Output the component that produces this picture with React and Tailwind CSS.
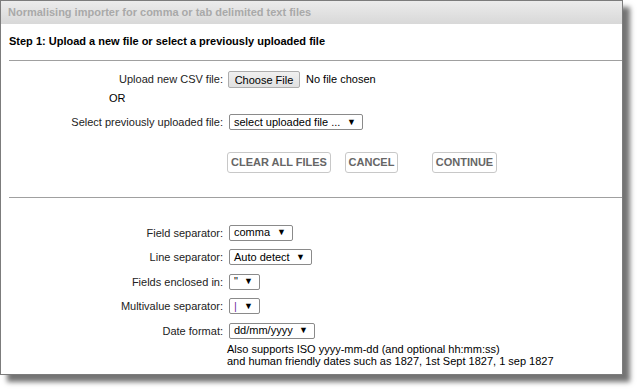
import React from "react";

const font = { fontFamily: '"Liberation Sans", Arial, sans-serif' };

const FakeSelect = ({ value, width }) => (
  <div
    className={`flex h-[16px] items-center justify-between rounded-[2px] border border-[#8a8a8a] bg-white pl-[4px] pr-[6px] text-[11px] leading-none text-black ${width}`}
  >
    <span>{value}</span>
    <span className="text-[9px]">▼</span>
  </div>
);

const Row = ({ label, children, className = "" }) => (
  <div className={`flex items-center ${className}`}>
    <div className="w-[222px] text-right text-[11px] text-[#222]">{label}</div>
    <div className="ml-[6px] flex items-center">{children}</div>
  </div>
);

const ActionButton = ({ children, className = "" }) => (
  <button
    className={`h-[21px] whitespace-nowrap rounded-[3px] border border-[#c8c8c8] bg-white px-[2px] text-[11px] font-bold text-[#666] ${className}`}
  >
    {children}
  </button>
);

export default function App() {
  return (
    <div className="h-[389px] w-[638px] bg-white" style={font}>
      <div className="flex h-[375px] w-[623px] flex-col border border-[#7c7c7c] bg-white shadow-[7px_7px_5px_rgba(0,0,0,0.55)]">
        {/* title bar */}
        <div className="flex h-[23px] items-center bg-gradient-to-b from-[#ececec] to-[#d8d8d8] pl-[7px] text-[11px] font-bold text-[#a9a9a9]">
          Normalising importer for comma or tab delimited text files
        </div>

        <div className="pt-[10px] pl-[8px] text-[11px] font-bold text-black leading-[14px]">
          Step 1: Upload a new file or select a previously uploaded file
        </div>
        <div className="ml-[8px] mt-[12px] border-t border-[#a0a0a0]" />

        {/* upload section */}
        <Row label="Upload new CSV file:" className="mt-[10px]">
          <button className="-ml-[1px] h-[17px] w-[72px] rounded-[2px] border border-[#adadad] bg-gradient-to-b from-[#f0f0f0] to-[#e1e1e1] text-[11px] text-black">
            Choose File
          </button>
          <span className="ml-[6px] text-[11px] text-black">No file chosen</span>
        </Row>
        <div className="ml-[108px] mt-[3px] text-[11px] leading-[14px] text-black">OR</div>
        <Row label="Select previously uploaded file:" className="mt-[9px]">
          <FakeSelect value="select uploaded file ..." width="w-[134px]" />
        </Row>

        <div className="mt-[21px] flex pl-[226px]">
          <ActionButton className="w-[104px]">CLEAR ALL FILES</ActionButton>
          <ActionButton className="ml-[14px] w-[53px]">CANCEL</ActionButton>
          <ActionButton className="ml-[34px] w-[65px]">CONTINUE</ActionButton>
        </div>

        <div className="ml-[8px] mt-[24px] border-t border-[#a0a0a0]" />

        {/* options */}
        <div className="mt-[27px] flex flex-col gap-[8px]">
          <Row label="Field separator:">
            <FakeSelect value="comma" width="w-[64px]" />
          </Row>
          <Row label="Line separator:">
            <FakeSelect value="Auto detect" width="w-[83px]" />
          </Row>
          <Row label="Fields enclosed in:">
            <FakeSelect value={'"'} width="w-[31px]" />
          </Row>
          <Row label="Multivalue separator:">
            <FakeSelect value={<span className="text-[#7030a0]">|</span>} width="w-[31px]" />
          </Row>
          <Row label="Date format:">
            <FakeSelect value="dd/mm/yyyy" width="w-[86px]" />
          </Row>
        </div>
        <div className="ml-[226px] mt-[4px] text-[11px] leading-[12px] text-black">
          <div>Also supports ISO yyyy-mm-dd (and optional hh:mm:ss)</div>
          <div>and human friendly dates such as 1827, 1st Sept 1827, 1 sep 1827</div>
        </div>
      </div>
    </div>
  );
}
